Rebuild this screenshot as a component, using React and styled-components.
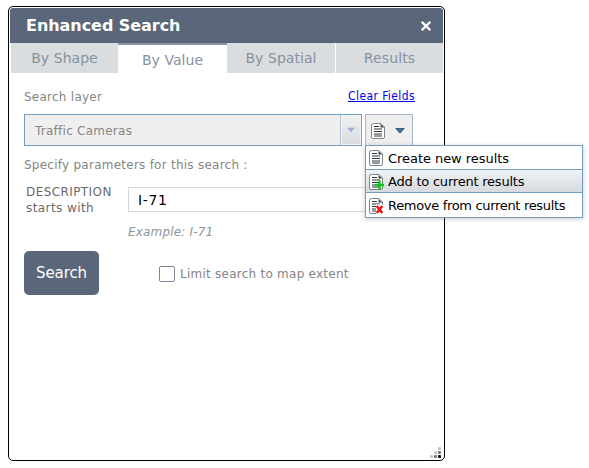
import React from "react";
import styled, { createGlobalStyle } from "styled-components";

const GlobalStyle = createGlobalStyle`
  * { box-sizing: border-box; }
  body { margin: 0; background: #fff; font-family: "DejaVu Sans", Verdana, sans-serif; font-size: 12px; }
`;

const Page = styled.div`
  width: 589px;
  height: 468px;
  padding: 6px 0 0 8px;
  overflow: hidden;
`;

const Dialog = styled.section`
  position: relative;
  display: flex;
  flex-direction: column;
  width: 437px;
  height: 455px;
  padding: 1px;
  border: 1px solid #000;
  border-radius: 5px;
  background: #fff;
`;

const Header = styled.header`
  display: flex;
  align-items: center;
  justify-content: space-between;
  height: 35px;
  flex: none;
  padding: 0 12px 0 16px;
  border-radius: 3px 3px 0 0;
  background: #5a6679;
  color: #fff;
`;

const Title = styled.h1`
  margin: 0;
  font-size: 16px;
  font-weight: bold;
  line-height: 37px;
  letter-spacing: ${(p) => p.$track}px;
`;

const Close = styled.button`
  display: flex;
  padding: 0;
  border: 0;
  background: none;
  color: #fff;
`;

const Tabs = styled.nav`
  display: grid;
  grid-template-columns: 107px 109px 108px 107px;
  height: 30px;
  flex: none;
  padding-left: 1px;
  & > :last-child { margin-left: 1px; margin-right: -1px; }
`;

const Tab = styled.button`
  padding: ${(p) => (p.$active ? "2px 0 0" : "0")};
  border: 0;
  border-top: ${(p) => (p.$active ? "2px solid #8c95a6" : "0")};
  background: ${(p) => (p.$active ? "#fff" : "#d9dddf")};
  color: #8792a0;
  font: 14px/30px "DejaVu Sans", Verdana, sans-serif;
  line-height: ${(p) => (p.$active ? 26 : 30)}px;
  letter-spacing: ${(p) => p.$track}px;
  text-align: center;
`;

const Body = styled.div`
  display: flex;
  flex-direction: column;
  padding: 14px 30px 0 14px;
`;

const Row = styled.div`
  display: flex;
  justify-content: space-between;
  height: 20px;
  line-height: 20px;
`;

const Label = styled.span`
  color: #858585;
  font-size: 12px;
  letter-spacing: 0.25px;
  white-space: nowrap;
`;

const ClearLink = styled.a`
  height: 16px;
  margin-right: -2px;
  color: #0000ee;
  font: 12px/18px "DejaVu Sans Condensed", "DejaVu Sans", Tahoma, sans-serif;
  font-stretch: condensed;
  letter-spacing: ${(p) => p.$track}px;
  text-decoration: underline;
  white-space: nowrap;
`;

const Controls = styled.div`
  display: flex;
  gap: 3px;
  margin-top: 7px;
`;

const Combo = styled.div`
  display: flex;
  justify-content: space-between;
  width: 338px;
  height: 32px;
  padding-left: 10px;
  border: 1px solid #759dc0;
  background: #efefef;
  line-height: 32px;
`;

const ComboArrow = styled.span`
  display: flex;
  align-items: center;
  justify-content: center;
  width: 21px;
  border-left: 1px solid #b3c2d8;
  box-shadow: inset 0 0 0 1px #f3f5f7;
  background: linear-gradient(#f0f1f2, #d8dce0);
`;

const ModeButton = styled.button`
  display: flex;
  align-items: center;
  gap: 9px;
  width: 48px;
  height: 32px;
  padding: 2px 0 0 5px;
  border: 1px solid #a9b8cf;
  background: #efefef;
`;

const Hint = styled.div`
  margin-top: 9px;
  height: 20px;
  line-height: 20px;
`;

const Field = styled.div`
  display: grid;
  grid-template-columns: 104px 285px;
  height: 33px;
  margin-top: 9px;
`;

const FieldName = styled.label`
  padding: 0 0 0 2px;
  color: #6a6a6e;
  font-size: 12px;
  line-height: 16px;
  letter-spacing: ${(p) => p.$track}px;
`;

const FieldInput = styled.input`
  display: block;
  width: 285px;
  height: 25px;
  margin-top: 3px;
  padding: 1px 9px 0;
  border: 1px solid #d5d9dd;
  background: #fff;
  color: #000;
  font: 14px "DejaVu Sans", Verdana, sans-serif;
  letter-spacing: ${(p) => p.$track}px;
`;

const Example = styled.div`
  margin: 7px 0 0 104px;
  height: 17px;
  color: #8c979f;
  font-size: 12px;
  font-style: italic;
  line-height: 17px;
  letter-spacing: ${(p) => p.$track}px;
`;

const Actions = styled.div`
  display: flex;
  align-items: center;
  height: 44px;
  margin-top: 10px;
`;

const SearchButton = styled.button`
  width: 75px;
  height: 44px;
  padding: 0;
  border: 0;
  border-radius: 5px;
  background: #5a6679;
  color: #fff;
  font: 15px "DejaVu Sans", Verdana, sans-serif;
  letter-spacing: ${(p) => p.$track}px;
`;

const Check = styled.label`
  display: flex;
  align-items: center;
  gap: 5px;
  margin: 2px 0 0 60px;
`;

const Box = styled.span`
  width: 16px;
  height: 16px;
  border: 1px solid #7d8795;
  border-radius: 2px;
  background: #fff;
`;

const Menu = styled.ul`
  position: absolute;
  left: 356px;
  top: 138px;
  display: grid;
  grid-template-rows: 23px 22px 24px;
  gap: 1px;
  width: 218px;
  margin: 0;
  padding: 0;
  border: 1px solid #759dc0;
  background: #759dc0;
  box-shadow: 0 1px 5px rgba(0, 0, 0, 0.22);
  list-style: none;
`;

const MenuItem = styled.li`
  display: flex;
  align-items: center;
  gap: 4px;
  padding: 1px 0 0 3px;
  background: ${(p) => (p.$active ? "linear-gradient(#f1f2f3, #d6dadf)" : "#fff")};
  color: #000;
  font-size: 13px;
  letter-spacing: ${(p) => p.$track}px;
  white-space: nowrap;
`;

const Grip = styled.svg`
  position: absolute;
  right: 3px;
  bottom: 2px;
`;

function Doc({ mark }) {
  return (
    <svg width="15" height="16" viewBox="0 0 15 16">
      <path
        d="M2.5 .5H10L13.5 4V14Q13.5 15.5 12 15.5H2Q.5 15.5 .5 14V2.5Q.5 .5 2.5 .5Z"
        fill="#fff"
        stroke="#7d858c"
      />
      <path d="M9.5 1L13.3 4.5H9.5Z" fill="#40484f" />
      <path d="M3 3.5H8M3 6H11M3 8.5H11M3 11H11M3 13H11" stroke="#30363b" strokeWidth="1.1" />
      {mark === "add" && (
        <path d="M10.5 6.5V15.5M6 11H15" stroke="#14c41a" strokeWidth="2.6" />
      )}
      {mark === "remove" && (
        <>
          <path d="M7 6.5H14V16H7Z" fill="#fff" />
          <path d="M7.7 8L13.3 15M13.3 8L7.7 15" stroke="#ee1111" strokeWidth="2.4" />
        </>
      )}
    </svg>
  );
}

function Caret({ size, color, edge }) {
  return (
    <svg width={size} height="6" viewBox="0 0 10 6">
      <path d="M.8 .5H9.2L5 5.2Z" fill={color} stroke={edge} />
    </svg>
  );
}

export default function App() {
  return (
    <Page>
      <GlobalStyle />
      <Dialog>
        <Header>
          <Title $track={-0.05}>Enhanced Search</Title>
          <Close aria-label="Close">
            <svg width="10" height="10" viewBox="0 0 10 10">
              <path d="M.8 .8L9.2 9.2M9.2 .8L.8 9.2" stroke="currentColor" strokeWidth="2.3" />
            </svg>
          </Close>
        </Header>
        <Tabs>
          <Tab $track={0.05}>By Shape</Tab>
          <Tab $active $track={0.05}>By Value</Tab>
          <Tab $track={0.05}>By Spatial</Tab>
          <Tab $track={0.15}>Results</Tab>
        </Tabs>
        <Body>
          <Row>
            <Label>Search layer</Label>
            <ClearLink $track={0.4}>Clear Fields</ClearLink>
          </Row>
          <Controls>
            <Combo>
              <Label>Traffic Cameras</Label>
              <ComboArrow><Caret size="8" color="#98a9d0" edge="#aab8d8" /></ComboArrow>
            </Combo>
            <ModeButton aria-label="Result mode">
              <Doc />
              <Caret size="10" color="#4377a8" edge="#315d88" />
            </ModeButton>
          </Controls>
          <Hint><Label>Specify parameters for this search :</Label></Hint>
          <Field>
            <FieldName $track={0.42}>DESCRIPTION<br />starts with</FieldName>
            <FieldInput $track={0.6} defaultValue="I-71" />
          </Field>
          <Example $track={0.17}>Example: I-71</Example>
          <Actions>
            <SearchButton $track={-0.1}>Search</SearchButton>
            <Check>
              <Box />
              <Label>Limit search to map extent</Label>
            </Check>
          </Actions>
        </Body>
        <Menu>
          <MenuItem $track={-0.05}><Doc />Create new results</MenuItem>
          <MenuItem $active $track={-0.22}><Doc mark="add" />Add to current results</MenuItem>
          <MenuItem $track={-0.32}><Doc mark="remove" />Remove from current results</MenuItem>
        </Menu>
        <Grip width="11" height="11" viewBox="0 0 11 11">
          <g fill="#c4c4c4">
            <rect x="8" y="0" width="3" height="3" rx="1" />
            <rect x="4" y="4" width="3" height="3" rx="1" />
            <rect x="0" y="8" width="3" height="3" rx="1" />
          </g>
          <rect x="8" y="4" width="3" height="3" rx="1" fill="#777" />
          <rect x="4" y="8" width="3" height="3" rx="1" fill="#777" />
          <rect x="8" y="8" width="3" height="3" rx="1" fill="#111" />
        </Grip>
      </Dialog>
    </Page>
  );
}
